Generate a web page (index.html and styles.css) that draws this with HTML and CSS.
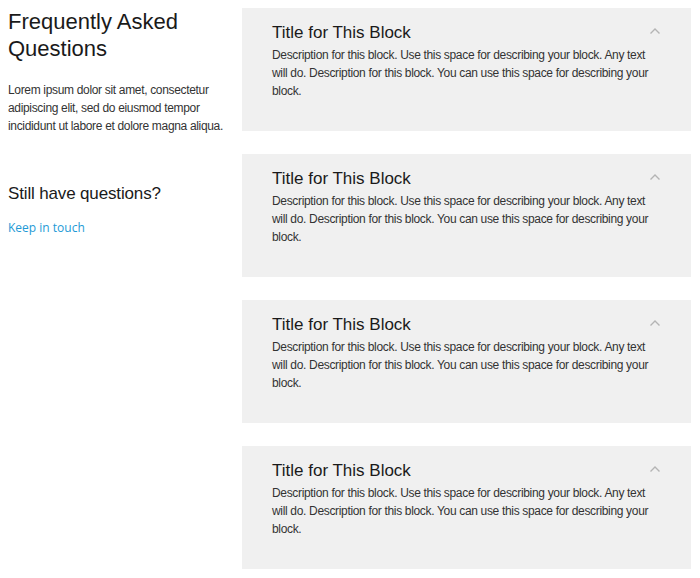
FILE: index.html
```html
<!DOCTYPE html>
<html>
<head>
<meta charset="utf-8">
<link rel="stylesheet" href="styles.css">
</head>
<body>
<div class="page">
  <aside class="intro">
    <h1 class="intro-title">Frequently Asked Questions</h1>
    <p class="intro-text">Lorem ipsum dolor sit amet, consectetur adipiscing elit, sed do eiusmod tempor incididunt ut labore et dolore magna aliqua.</p>
    <h2 class="intro-sub">Still have questions?</h2>
    <a class="intro-link" href="#">Keep in touch</a>
  </aside>
  <main class="faq">
    <section class="card">
      <div class="card-head">
        <h3 class="card-title">Title for This Block</h3>
        <svg class="chev" width="12" height="8" viewBox="0 0 12 8"><path d="M1.5 6.5 L6 2 L10.5 6.5" fill="none" stroke="#b4b4b4" stroke-width="1.4"/></svg>
      </div>
      <p class="card-text">Description for this block. Use this space for describing your block. Any text will do. Description for this block. You can use this space for describing your block.</p>
    </section>
    <section class="card">
      <div class="card-head">
        <h3 class="card-title">Title for This Block</h3>
        <svg class="chev" width="12" height="8" viewBox="0 0 12 8"><path d="M1.5 6.5 L6 2 L10.5 6.5" fill="none" stroke="#b4b4b4" stroke-width="1.4"/></svg>
      </div>
      <p class="card-text">Description for this block. Use this space for describing your block. Any text will do. Description for this block. You can use this space for describing your block.</p>
    </section>
    <section class="card">
      <div class="card-head">
        <h3 class="card-title">Title for This Block</h3>
        <svg class="chev" width="12" height="8" viewBox="0 0 12 8"><path d="M1.5 6.5 L6 2 L10.5 6.5" fill="none" stroke="#b4b4b4" stroke-width="1.4"/></svg>
      </div>
      <p class="card-text">Description for this block. Use this space for describing your block. Any text will do. Description for this block. You can use this space for describing your block.</p>
    </section>
    <section class="card">
      <div class="card-head">
        <h3 class="card-title">Title for This Block</h3>
        <svg class="chev" width="12" height="8" viewBox="0 0 12 8"><path d="M1.5 6.5 L6 2 L10.5 6.5" fill="none" stroke="#b4b4b4" stroke-width="1.4"/></svg>
      </div>
      <p class="card-text">Description for this block. Use this space for describing your block. Any text will do. Description for this block. You can use this space for describing your block.</p>
    </section>
  </main>
</div>
</body>
</html>
```
FILE: styles.css
```css
html, body {
  margin: 0;
  padding: 0;
  background: #fff;
}
body {
  padding: 8px 9px 8px 8px;
  font-family: "Liberation Sans", Arial, sans-serif;
  color: #222;
}
.page {
  display: flex;
  gap: 12px;
  align-items: flex-start;
}
.intro {
  width: 222px;
  flex: none;
}
.intro-title {
  margin: 0;
  font-size: 22px;
  line-height: 27px;
  font-weight: normal;
  color: #1a1a1a;
}
.intro-text {
  margin: 19px 0 0;
  font-size: 12px;
  letter-spacing: -0.33px;
  line-height: 18px;
  color: #333;
}
.intro-sub {
  margin: 48px 0 0;
  font-size: 17px;
  letter-spacing: -0.15px;
  line-height: 22px;
  font-weight: normal;
  color: #1a1a1a;
}
.intro-link {
  display: block;
  margin-top: 14px;
  font-family: "Open Sans", sans-serif;
  font-size: 12px;
  line-height: 18px;
  color: #1e9ad6;
  text-decoration: none;
}
.faq {
  flex: 1;
  display: flex;
  flex-direction: column;
  gap: 23px;
}
.card {
  background: #f0f0f0;
  padding: 14px 30px 0;
  height: 123px;
  box-sizing: border-box;
}
.card-head {
  display: flex;
  justify-content: space-between;
  align-items: flex-start;
}
.card-title {
  margin: 0;
  font-size: 17px;
  line-height: 22px;
  font-weight: normal;
  color: #1a1a1a;
}
.chev {
  margin-top: 5px;
}
.card-text {
  margin: 2px 0 0;
  padding-right: 8px;
  font-size: 12px;
  letter-spacing: -0.33px;
  line-height: 18px;
  color: #333;
}
```
